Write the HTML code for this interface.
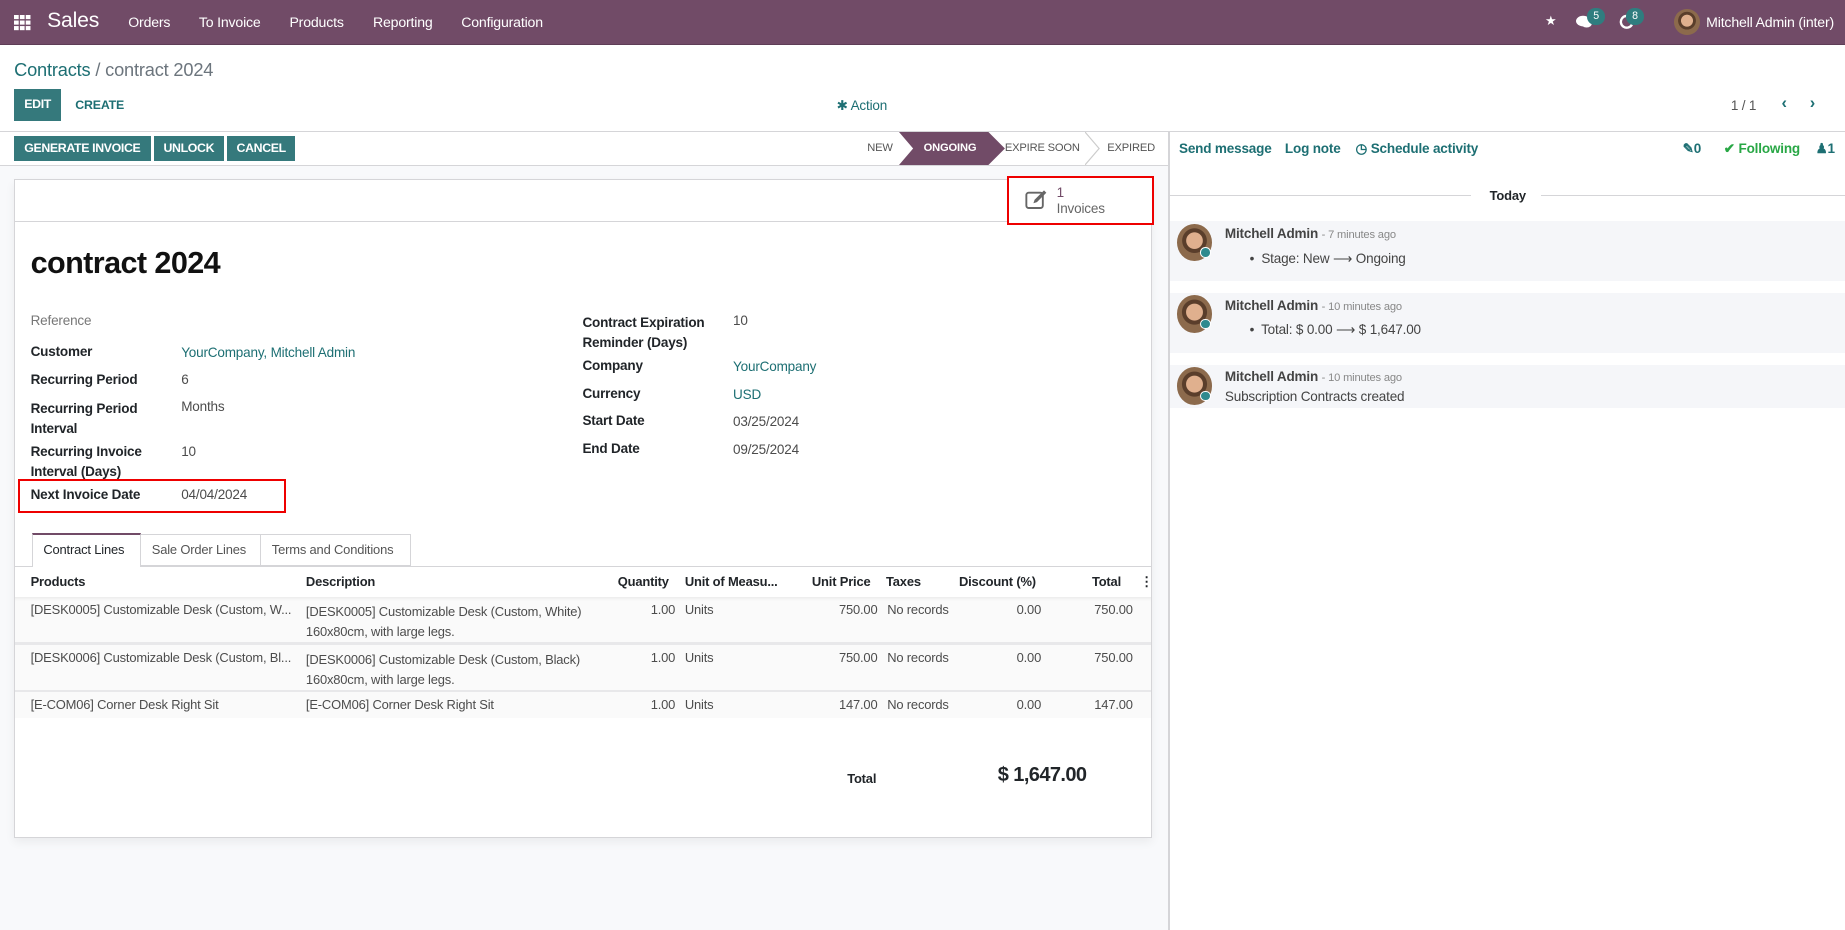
<!DOCTYPE html>
<html><head><meta charset="utf-8"><style>
*{box-sizing:border-box;margin:0;padding:0}
html,body{width:1845px;height:930px;overflow:hidden;background:#fff}
#w{zoom:1.17666;width:1568px;height:790px;position:relative;font-family:"Liberation Sans",sans-serif;font-size:11.5px;color:#212529;letter-spacing:-0.15px}
.a{position:absolute;white-space:nowrap}
.nav{left:0;top:0;width:1568px;height:38px;background:#714b67;border-bottom:1px solid #5e3d56}
.nav .a{color:#fff;top:12px;font-size:12px}
.teal{color:#1d6f73}
.btn{position:absolute;background:#35797c;color:#fff;font-weight:bold;font-size:10.5px;text-align:center;line-height:21px;height:21px;letter-spacing:-0.3px}
.lbl{font-weight:bold;font-size:11.5px;color:#212529}
.val{font-size:11.5px;color:#4c4c4c}
.th{font-weight:bold;font-size:11px;top:488px}
.td{font-size:11px;color:#4c4c4c}
.msg{left:994px;width:574px;background:#f5f6f9}
.av{position:absolute;width:30px;height:32px;border-radius:50%;background:radial-gradient(circle at 50% 45%,#e0b08e 0 30%,#5a3e2b 32% 45%,#8c6a4c 47%);}
.dot{position:absolute;width:9px;height:9px;border-radius:50%;background:#2f8a8e;border:1.5px solid #fff}
.r{text-align:right}
</style></head><body><div id="w">
<div class="a nav">
 <svg class="a" style="left:12px;top:13px" width="14" height="13"><g fill="#fff"><rect x="0" y="0" width="4" height="3.5"/><rect x="5" y="0" width="4" height="3.5"/><rect x="10" y="0" width="4" height="3.5"/><rect x="0" y="4.7" width="4" height="3.5"/><rect x="5" y="4.7" width="4" height="3.5"/><rect x="10" y="4.7" width="4" height="3.5"/><rect x="0" y="9.4" width="4" height="3.5"/><rect x="5" y="9.4" width="4" height="3.5"/><rect x="10" y="9.4" width="4" height="3.5"/></g></svg>
 <div class="a" style="left:40px;top:8px;font-size:18px">Sales</div>
 <div class="a" style="left:109px">Orders</div>
 <div class="a" style="left:169px">To Invoice</div>
 <div class="a" style="left:246px">Products</div>
 <div class="a" style="left:317px">Reporting</div>
 <div class="a" style="left:392px">Configuration</div>
 <div class="a" style="left:1313px;top:11px;font-size:11px">&#9733;</div>
 <svg class="a" style="left:1339px;top:12px" width="14" height="13"><ellipse cx="6" cy="6" rx="6" ry="4.5" fill="#fff"/><ellipse cx="9" cy="8" rx="4.5" ry="3.5" fill="#fff"/></svg>
 <div class="a" style="left:1349px;top:7px;width:15px;height:14px;border-radius:7px;background:#2f7d7f;font-size:9px;text-align:center;line-height:14px">5</div>
 <svg class="a" style="left:1376px;top:12px" width="13" height="13"><path d="M10 3 A5 5 0 1 0 11 9" fill="none" stroke="#fff" stroke-width="2"/></svg>
 <div class="a" style="left:1382px;top:7px;width:15px;height:14px;border-radius:7px;background:#2f7d7f;font-size:9px;text-align:center;line-height:14px">8</div>
 <div class="av" style="left:1423px;top:8px;width:22px;height:22px"></div>
 <div class="a" style="left:1450px">Mitchell Admin (inter)</div>
</div>
<div class="a" style="left:12px;top:50px;font-size:15.5px"><span class="teal">Contracts</span><span style="color:#6c757d"> / contract 2024</span></div>
<div class="btn" style="left:12px;top:76px;width:40px;height:27px;line-height:27px">EDIT</div>
<div class="a teal" style="left:64px;top:83px;font-weight:bold;font-size:10.5px">CREATE</div>
<div class="a teal" style="left:711px;top:83px;font-size:11.5px">&#10033; Action</div>
<div class="a" style="left:1471px;top:83px;color:#555">1 / 1</div>
<div class="a teal" style="left:1514px;top:80px;font-size:14px;font-weight:bold">&#8249;</div>
<div class="a teal" style="left:1538px;top:80px;font-size:14px;font-weight:bold">&#8250;</div>
<div class="a" style="left:0;top:111px;width:1568px;height:1px;background:#d5d5d8"></div>
<div class="a" style="left:0;top:141px;width:993px;height:649px;background:#f8f9fb"></div>
<div class="btn" style="left:12px;top:116px;width:116px">GENERATE INVOICE</div>
<div class="btn" style="left:131px;top:116px;width:59px">UNLOCK</div>
<div class="btn" style="left:193px;top:116px;width:58px">CANCEL</div>
<div class="a" style="left:737px;top:121px;font-size:9.5px;color:#555">NEW</div>
<svg class="a" style="left:764px;top:112px" width="90" height="28"><polygon points="0,0 76,0 90,14 76,28 0,28 12,14" fill="#714b67"/></svg>
<div class="a" style="left:785px;top:121px;font-size:9.5px;color:#fff;font-weight:bold">ONGOING</div>
<div class="a" style="left:854px;top:121px;font-size:9.5px;color:#555">EXPIRE SOON</div>
<svg class="a" style="left:922px;top:112px" width="14" height="28"><polyline points="0,0 12,14 0,28" fill="none" stroke="#ccc"/></svg>
<div class="a" style="left:941px;top:121px;font-size:9.5px;color:#555">EXPIRED</div>
<div class="a" style="left:0;top:140px;width:993px;height:1px;background:#d5d5d8"></div>
<div class="a" style="left:12px;top:152px;width:967px;height:560px;background:#fff;border:1px solid #d5d5d8;box-shadow:0 4px 8px rgba(0,0,0,.06)"></div>
<div class="a" style="left:13px;top:188px;width:965px;height:1px;background:#d5d5d8"></div>
<div class="a" style="left:856px;top:150px;width:125px;height:41px;border:2px solid #e00;background:#fff"></div>
<svg class="a" style="left:870px;top:160px" width="22" height="20" viewBox="0 0 22 20"><rect x="2" y="4" width="14" height="13" rx="2" fill="none" stroke="#666" stroke-width="1.6"/><path d="M8 13 L9 10 L17 2 L19 4 L11 12 Z" fill="#666"/></svg>
<div class="a" style="left:898px;top:157px;font-size:11.5px;color:#714b67">1</div>
<div class="a" style="left:898px;top:171px;font-size:11.5px;color:#666">Invoices</div>
<div class="a" style="left:26px;top:209px;font-size:26px;font-weight:bold;color:#111;letter-spacing:-0.5px">contract 2024</div>
<div class="a" style="left:26px;top:266px;color:#777">Reference</div>
<div class="a lbl" style="left:26px;top:292px">Customer</div><div class="a teal" style="left:154px;top:293px">YourCompany, Mitchell Admin</div>
<div class="a lbl" style="left:26px;top:316px">Recurring Period</div><div class="a val" style="left:154px;top:316px">6</div>
<div class="a lbl" style="left:26px;top:339px;line-height:17px">Recurring Period<br>Interval</div><div class="a val" style="left:154px;top:339px">Months</div>
<div class="a lbl" style="left:26px;top:376px;line-height:17px">Recurring Invoice<br>Interval (Days)</div><div class="a val" style="left:154px;top:377px">10</div>
<div class="a" style="left:15px;top:407px;width:228px;height:29px;border:2px solid #e00"></div>
<div class="a lbl" style="left:26px;top:414px">Next Invoice Date</div><div class="a val" style="left:154px;top:414px">04/04/2024</div>
<div class="a lbl" style="left:495px;top:266px;line-height:17px">Contract Expiration<br>Reminder (Days)</div><div class="a val" style="left:623px;top:266px">10</div>
<div class="a lbl" style="left:495px;top:304px">Company</div><div class="a teal" style="left:623px;top:305px">YourCompany</div>
<div class="a lbl" style="left:495px;top:328px">Currency</div><div class="a teal" style="left:623px;top:329px">USD</div>
<div class="a lbl" style="left:495px;top:351px">Start Date</div><div class="a val" style="left:623px;top:352px">03/25/2024</div>
<div class="a lbl" style="left:495px;top:375px">End Date</div><div class="a val" style="left:623px;top:376px">09/25/2024</div>
<div class="a" style="left:13px;top:481px;width:965px;height:1px;background:#d5d5d8"></div>
<div class="a" style="left:27px;top:453px;width:93px;height:29px;border:1px solid #d5d5d8;border-top:2px solid #714b67;border-bottom:none;background:#fff;padding:6px 0 0 9px;font-size:11px">Contract Lines</div>
<div class="a" style="left:120px;top:454px;width:102px;height:27px;border:1px solid #d5d5d8;border-left:none;padding:6px 0 0 9px;color:#555;font-size:11px">Sale Order Lines</div>
<div class="a" style="left:222px;top:454px;width:127px;height:27px;border:1px solid #d5d5d8;border-left:none;padding:6px 0 0 9px;color:#555;font-size:11px">Terms and Conditions</div>
<div class="a th" style="left:26px">Products</div>
<div class="a th" style="left:260px">Description</div>
<div class="a th" style="left:525px">Quantity</div>
<div class="a th" style="left:582px">Unit of Measu...</div>
<div class="a th" style="left:690px">Unit Price</div>
<div class="a th" style="left:753px">Taxes</div>
<div class="a th" style="left:815px">Discount (%)</div>
<div class="a th" style="left:928px">Total</div>
<div class="a th" style="left:969px">&#8942;</div>
<div class="a" style="left:13px;top:507px;width:965px;height:103px;background:#fafafa;box-shadow:inset 0 3px 3px -2px rgba(0,0,0,.08)"></div>
<div class="a" style="left:13px;top:546px;width:965px;height:2px;background:#e8e8ea"></div>
<div class="a" style="left:13px;top:586px;width:965px;height:2px;background:#e8e8ea"></div>
<div class="a td" style="left:26px;top:512px">[DESK0005] Customizable Desk (Custom, W...</div>
<div class="a td" style="left:260px;top:512px;line-height:17px">[DESK0005] Customizable Desk (Custom, White)<br>160x80cm, with large legs.</div>
<div class="a td" style="left:26px;top:552px">[DESK0006] Customizable Desk (Custom, Bl...</div>
<div class="a td" style="left:260px;top:552px;line-height:17px">[DESK0006] Customizable Desk (Custom, Black)<br>160x80cm, with large legs.</div>
<div class="a td" style="left:26px;top:592px">[E-COM06] Corner Desk Right Sit</div>
<div class="a td" style="left:260px;top:592px">[E-COM06] Corner Desk Right Sit</div>
<div class="a td" style="left:553px;top:512px">1.00</div><div class="a td" style="left:582px;top:512px">Units</div><div class="a td" style="left:713px;top:512px">750.00</div><div class="a td" style="left:754px;top:512px">No records</div><div class="a td" style="left:864px;top:512px">0.00</div><div class="a td" style="left:930px;top:512px">750.00</div>
<div class="a td" style="left:553px;top:552px">1.00</div><div class="a td" style="left:582px;top:552px">Units</div><div class="a td" style="left:713px;top:552px">750.00</div><div class="a td" style="left:754px;top:552px">No records</div><div class="a td" style="left:864px;top:552px">0.00</div><div class="a td" style="left:930px;top:552px">750.00</div>
<div class="a td" style="left:553px;top:592px">1.00</div><div class="a td" style="left:582px;top:592px">Units</div><div class="a td" style="left:713px;top:592px">147.00</div><div class="a td" style="left:754px;top:592px">No records</div><div class="a td" style="left:864px;top:592px">0.00</div><div class="a td" style="left:930px;top:592px">147.00</div>
<div class="a" style="left:720px;top:655px;font-weight:bold;font-size:11px">Total</div>
<div class="a" style="left:848px;top:649px;font-size:17px;font-weight:bold;letter-spacing:-.5px">$ 1,647.00</div>
<div class="a" style="left:993px;top:112px;width:1px;height:678px;background:#d5d5d8"></div>
<div class="a teal" style="left:1002px;top:120px;font-weight:bold">Send message</div>
<div class="a teal" style="left:1092px;top:120px;font-weight:bold">Log note</div>
<div class="a teal" style="left:1152px;top:120px;font-weight:bold">&#9719; Schedule activity</div>
<div class="a" style="left:1430px;top:120px;font-weight:bold;color:#1d6f73">&#9998;0</div>
<div class="a" style="left:1465px;top:120px;font-weight:bold;color:#28a745">&#10004; Following</div>
<div class="a" style="left:1543px;top:120px;font-weight:bold;color:#1d6f73">&#9823;1</div>
<div class="a" style="left:994px;top:166px;width:256px;height:1px;background:#d5d5d8"></div>
<div class="a" style="left:1310px;top:166px;width:258px;height:1px;background:#d5d5d8"></div>
<div class="a" style="left:1266px;top:160px;font-weight:bold;font-size:11px">Today</div>
<div class="a msg" style="top:188px;height:51px"></div>
<div class="a msg" style="top:249px;height:51px"></div>
<div class="a msg" style="top:310px;height:37px"></div>
<div class="av" style="left:1000px;top:190px"></div><div class="dot" style="left:1020px;top:210px"></div>
<div class="av" style="left:1000px;top:251px"></div><div class="dot" style="left:1020px;top:271px"></div>
<div class="av" style="left:1000px;top:312px"></div><div class="dot" style="left:1020px;top:332px"></div>
<div class="a" style="left:1041px;top:192px;font-weight:bold;color:#444">Mitchell Admin <span style="font-weight:normal;font-size:9.5px;color:#888">- 7 minutes ago</span></div>
<div class="a" style="left:1062px;top:213px;color:#444">&#8226;&nbsp; Stage: New &#10230; Ongoing</div>
<div class="a" style="left:1041px;top:253px;font-weight:bold;color:#444">Mitchell Admin <span style="font-weight:normal;font-size:9.5px;color:#888">- 10 minutes ago</span></div>
<div class="a" style="left:1062px;top:274px;color:#444">&#8226;&nbsp; Total: $ 0.00 &#10230; $ 1,647.00</div>
<div class="a" style="left:1041px;top:314px;font-weight:bold;color:#444">Mitchell Admin <span style="font-weight:normal;font-size:9.5px;color:#888">- 10 minutes ago</span></div>
<div class="a" style="left:1041px;top:331px;color:#444">Subscription Contracts created</div>
</div></body></html>
